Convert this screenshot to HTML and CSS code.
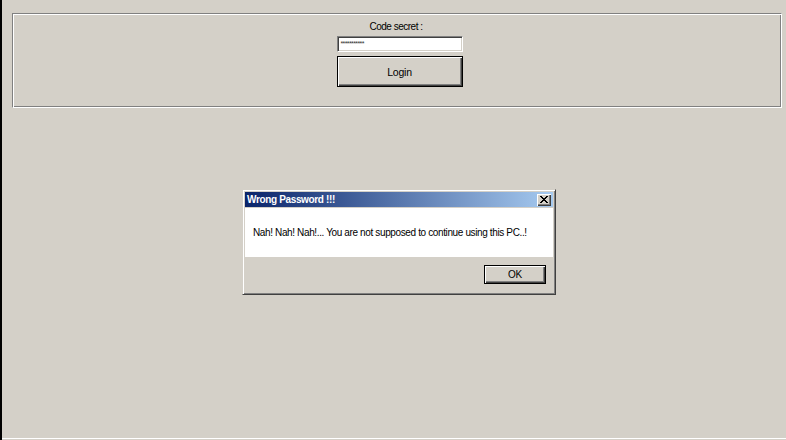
FILE: index.html
```html
<!DOCTYPE html>
<html>
<head>
<meta charset="utf-8">
<link rel="stylesheet" href="styles.css">
</head>
<body>
<div class="screen">
  <div class="group">
    <div class="label">Code secret :</div>
    <div class="input">***********</div>
    <div class="btn login"><span>Login</span></div>
  </div>
  <div class="spacer"></div>
  <div class="bottom-line"></div>

  <div class="dialog">
    <div class="titlebar">
      <span class="title">Wrong Password !!!</span>
      <div class="close">
        <svg width="8" height="7" viewBox="0 0 8 7"><path d="M0 0h2v1h-2zM6 0h2v1h-2zM1 1h2v1h-2zM5 1h2v1h-2zM2 2h4v1h-4zM3 3h2v1h-2zM2 4h4v1h-4zM1 5h2v1h-2zM5 5h2v1h-2zM0 6h2v1h-2zM6 6h2v1h-2z" fill="#000"/></svg>
      </div>
    </div>
    <div class="message">Nah! Nah! Nah!... You are not supposed to continue using this PC..!</div>
    <div class="footer">
      <div class="btn ok"><span>OK</span></div>
    </div>
  </div>
</div>
</body>
</html>
```

FILE: styles.css
```css
html, body {
  margin: 0;
  padding: 0;
  background: #d4d0c8;
}

.screen {
  position: relative;
  width: 786px;
  height: 440px;
  box-sizing: border-box;
  border-left: 2px solid #000;
  display: flex;
  flex-direction: column;
  font-family: "Liberation Sans", Arial, sans-serif;
  color: #000;
  overflow: hidden;
}

.group {
  margin: 13px 0 0 10px;
  width: 770px;
  height: 95px;
  box-sizing: border-box;
  border: 1px solid;
  border-color: #808080 #fff #fff #808080;
  box-shadow: inset 1px 1px #fff, inset -1px -1px #808080;
  display: flex;
  flex-direction: column;
  align-items: center;
  padding-top: 7px;
}

.label {
  font-size: 10px;
  line-height: 12px;
  height: 12px;
  letter-spacing: -0.5px;
  margin-right: 2px;
}

.input {
  margin-top: 3px;
  margin-left: 5px;
  width: 126px;
  height: 16px;
  box-sizing: border-box;
  background: #fff;
  border: 1px solid;
  border-color: #808080 #fff #fff #808080;
  box-shadow: inset 1px 1px #404040, inset -1px -1px #d4d0c8;
  font-size: 7px;
  line-height: 13px;
  padding-left: 3px;
  letter-spacing: -0.6px;
  color: #333;
}

.btn {
  box-sizing: border-box;
  border: 1px solid #000;
  background: #d4d0c8;
  box-shadow: inset 1px 1px #fff, inset -1px -1px #404040, inset -2px -2px #808080;
  display: flex;
  align-items: center;
  justify-content: center;
  font-size: 10px;
}

.login {
  margin-top: 4px;
  margin-left: 5px;
  width: 126px;
  height: 31px;
  font-size: 10.5px;
  letter-spacing: -0.2px;
}

.spacer {
  flex: 1;
}

.bottom-line {
  height: 1px;
  background: #fff;
  margin-bottom: 1px;
}

.dialog {
  position: absolute;
  left: 240px;
  top: 189px;
  width: 314px;
  height: 106px;
  box-sizing: border-box;
  border: 1px solid;
  border-color: #d4d0c8 #404040 #404040 #d4d0c8;
  box-shadow: inset 1px 1px #fff, inset -1px -1px #808080;
  background: #d4d0c8;
  padding: 2px;
  display: flex;
  flex-direction: column;
}

.titlebar {
  height: 15px;
  background: linear-gradient(to right, #0a246a, #a6caf0);
  display: flex;
  align-items: center;
  justify-content: space-between;
  padding-left: 2px;
}

.title {
  color: #fff;
  font-weight: bold;
  font-size: 10px;
  letter-spacing: -0.35px;
}

.close {
  width: 14px;
  height: 12px;
  margin-right: 2px;
  box-sizing: border-box;
  background: #d4d0c8;
  box-shadow: inset 1px 1px #fff, inset -1px -1px #404040, inset -2px -2px #808080;
  display: flex;
  align-items: center;
  justify-content: center;
}

.close svg {
  display: block;
}

.message {
  margin-top: 1px;
  height: 49px;
  background: #fff;
  display: flex;
  align-items: center;
  padding-left: 8px;
  font-size: 10px;
  letter-spacing: -0.37px;
}

.footer {
  flex: 1;
  display: flex;
  justify-content: flex-end;
  align-items: flex-start;
  padding: 8px 7px 0 0;
}

.ok {
  width: 62px;
  height: 19px;
  letter-spacing: -0.3px;
}
```
